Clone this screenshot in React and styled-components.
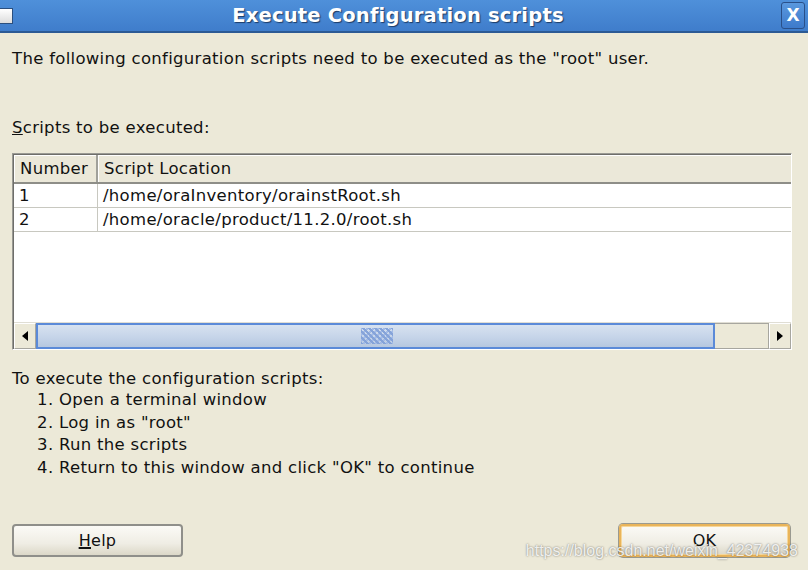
import styled, { createGlobalStyle } from 'styled-components';

const GlobalStyle = createGlobalStyle`
  html, body {
    margin: 0;
    padding: 0;
    background: #ece9d8;
  }
  body {
    font-family: "DejaVu Sans", "Liberation Sans", sans-serif;
  }
`;

const Window = styled.div`
  position: relative;
  width: 808px;
  height: 570px;
  overflow: hidden;
  background: #ece9d8;
  display: flex;
  flex-direction: column;
`;

const TitleBar = styled.div`
  height: 31px;
  flex: none;
  display: flex;
  align-items: center;
  justify-content: space-between;
  background: linear-gradient(#4f90da, #3f7dcb);
  border-bottom: 2px solid #2c5a94;
`;

const SysBox = styled.div`
  width: 12px;
  height: 14px;
  margin-top: 0;
  background: linear-gradient(#ffffff, #dcdcdc);
  border: 1px solid #2b4f7e;
  border-left: none;
`;

const Title = styled.div`
  flex: 1;
  text-align: center;
  color: #ffffff;
  font-weight: bold;
  font-size: 19.5px;
  letter-spacing: 0.2px;
  text-shadow: 1px 1px 1px #1c3b66;
  margin-left: 2px;
`;

const CloseBtn = styled.div`
  width: 22px;
  height: 25px;
  margin-right: 3px;
  margin-top: -1px;
  border: 1px solid #2a5089;
  border-radius: 3px;
  background: linear-gradient(#5a98de, #3d7acb);
  color: #ffffff;
  font-weight: bold;
  font-size: 17px;
  display: flex;
  align-items: center;
  justify-content: center;
`;

const Body = styled.div`
  flex: 1;
  display: flex;
  flex-direction: column;
  padding: 0 16px 0 12px;
  color: #111;
  font-size: 16.5px;
  letter-spacing: 0.3px;
`;

const Line = styled.div`
  margin-top: ${p => p.$top}px;
  line-height: 20px;
  white-space: nowrap;
`;

const Table = styled.div`
  margin-top: 15px;
  height: 194px;
  border: 1px solid #9a9a94;
  border-right-color: #ffffff;
  border-bottom-color: #ffffff;
  box-shadow: inset 1px 1px 0 #6e6e6a;
  background: #ffffff;
  display: flex;
  flex-direction: column;
  padding: 1px 0 0 1px;
`;

const Row = styled.div`
  display: grid;
  grid-template-columns: 84px 1fr;
  height: ${p => (p.$head ? 29 : 24)}px;
  background: ${p => (p.$head ? '#ebe8d9' : '#ffffff')};
  border-bottom: ${p => (p.$head ? '2px solid #8e8e88' : '1px solid #c8c8c0')};
  box-sizing: border-box;
`;

const Cell = styled.div`
  display: flex;
  align-items: center;
  padding-left: ${p => (p.$head ? 6 : 5)}px;
  border-right: ${p => (p.$last ? 'none' : p.$head ? '2px solid #a0a09a' : '1px solid #c8c8c0')};
  ${p => p.$head && 'box-shadow: inset 1px 1px 0 #ffffff;'}
  white-space: nowrap;
`;

const Filler = styled.div`
  flex: 1;
`;

const ScrollBar = styled.div`
  height: 26px;
  display: flex;
  background: #ece9d8;
  border-top: 1px solid #e0ded4;
`;

const Arrow = styled.div`
  width: 22px;
  flex: none;
  display: flex;
  align-items: center;
  justify-content: center;
  background: #ece9d8;
  border: 1px solid #a7a69f;
  border-top-color: #ffffff;
  border-left-color: #ffffff;
  box-sizing: border-box;
`;

const Thumb = styled.div`
  width: 679px;
  flex: none;
  box-sizing: border-box;
  border: 2px solid #5b8ad8;
  background: linear-gradient(#d7e2f0, #c4d3e8 60%, #b6c7df);
  display: flex;
  align-items: center;
  justify-content: center;
`;

const Grip = styled.div`
  width: 32px;
  height: 16px;
  margin-left: 3px;
  background-image: repeating-linear-gradient(
    45deg,
    #7f9fd8 0 2px,
    transparent 2px 4px
  ), repeating-linear-gradient(
    -45deg,
    #9fb8e6 0 2px,
    transparent 2px 4px
  );
  opacity: 0.9;
`;

const Track = styled.div`
  flex: 1;
  background: #ece9d8;
  border: 1px solid #a7a69f;
  border-left: none;
`;

const Steps = styled.ol`
  margin: 0;
  padding-left: 47px;
  line-height: 22.5px;
`;

const Buttons = styled.div`
  margin-top: auto;
  margin-bottom: 13px;
  display: flex;
  justify-content: space-between;
`;

const Button = styled.div`
  width: 171px;
  height: 33px;
  box-sizing: border-box;
  border-radius: 4px;
  border: 2px solid ${p => (p.$focus ? '#e9b45a' : '#8f8f8a')};
  box-shadow: ${p => (p.$focus ? 'inset 0 0 0 1px #f6d79a, 0 0 0 1px #9a9a90' : 'none')};
  background: linear-gradient(#fbfaf6, #efede4 60%, #dcd8c8);
  display: flex;
  align-items: center;
  justify-content: center;
  font-size: 16px;
  color: #111;
  margin-right: ${p => (p.$focus ? 2 : 0)}px;
  u {
    text-decoration-thickness: 2px;
  }
`;

const Watermark = styled.div`
  position: absolute;
  right: 10px;
  bottom: 10px;
  font-family: "Liberation Sans", Arial, sans-serif;
  font-size: 16px;
  letter-spacing: 0;
  color: rgba(255, 255, 255, 0.85);
  text-shadow: 0 0 2px rgba(0, 0, 0, 0.55);
  pointer-events: none;
`;

const rows = [
  ['1', '/home/oraInventory/orainstRoot.sh'],
  ['2', '/home/oracle/product/11.2.0/root.sh'],
];

const steps = [
  'Open a terminal window',
  'Log in as "root"',
  'Run the scripts',
  'Return to this window and click "OK" to continue',
];

export default function App() {
  return (
    <>
      <GlobalStyle />
      <Window>
        <TitleBar>
          <SysBox />
          <Title>Execute Configuration scripts</Title>
          <CloseBtn>X</CloseBtn>
        </TitleBar>
        <Body>
          <Line $top={16}>The following configuration scripts need to be executed as the "root" user.</Line>
          <Line $top={49}>
            <u>S</u>cripts to be executed:
          </Line>
          <Table>
            <Row $head>
              <Cell $head>Number</Cell>
              <Cell $head $last>Script Location</Cell>
            </Row>
            {rows.map(([n, path]) => (
              <Row key={n}>
                <Cell>{n}</Cell>
                <Cell $last>{path}</Cell>
              </Row>
            ))}
            <Filler />
            <ScrollBar>
              <Arrow>
                <svg width="6" height="10" viewBox="0 0 6 10">
                  <path d="M6 0 L0 5 L6 10 Z" fill="#000" />
                </svg>
              </Arrow>
              <Thumb>
                <Grip />
              </Thumb>
              <Track />
              <Arrow>
                <svg width="6" height="10" viewBox="0 0 6 10">
                  <path d="M0 0 L6 5 L0 10 Z" fill="#000" />
                </svg>
              </Arrow>
            </ScrollBar>
          </Table>
          <Line $top={19}>To execute the configuration scripts:</Line>
          <Steps>
            {steps.map(s => (
              <li key={s}>{s}</li>
            ))}
          </Steps>
          <Buttons>
            <Button>
              <span>
                <u>H</u>elp
              </span>
            </Button>
            <Button $focus>OK</Button>
          </Buttons>
        </Body>
        <Watermark>https://blog.csdn.net/weixin_42374938</Watermark>
      </Window>
    </>
  );
}
